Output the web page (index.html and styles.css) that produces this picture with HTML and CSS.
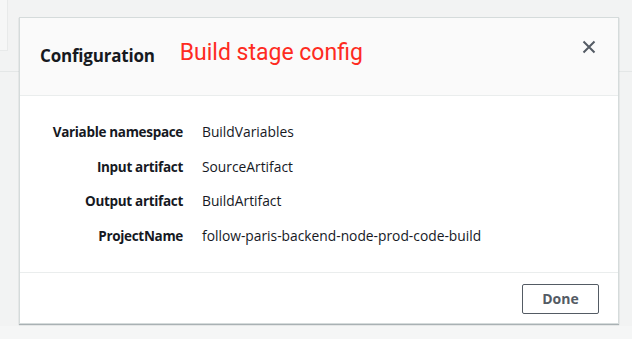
FILE: index.html
```html
<!DOCTYPE html>
<html lang="en">
<head>
    <meta charset="UTF-8">
    <meta name="viewport" content="width=device-width, initial-scale=1.0">
    <title>Configuration</title>
    <link rel="stylesheet" href="styles.css">
</head>
<body>
    <div class="side-panel"></div>

    <div class="modal" role="dialog" aria-labelledby="modalTitle">
        <header class="modal-header">
            <h2 id="modalTitle">Configuration</h2>
            <span class="note">Build stage config</span>
            <button class="close-btn" aria-label="Close">
                <svg width="14" height="14" viewBox="0 0 14 14" aria-hidden="true">
                    <path d="M1.5 1.5 L12.5 12.5 M12.5 1.5 L1.5 12.5" stroke="#545b64" stroke-width="2" fill="none"/>
                </svg>
            </button>
        </header>

        <div class="modal-body">
            <dl class="details">
                <dt>Variable namespace</dt>
                <dd>BuildVariables</dd>
                <dt>Input artifact</dt>
                <dd>SourceArtifact</dd>
                <dt>Output artifact</dt>
                <dd>BuildArtifact</dd>
                <dt>ProjectName</dt>
                <dd>follow-paris-backend-node-prod-code-build</dd>
            </dl>
        </div>

        <footer class="modal-footer">
            <button class="btn">Done</button>
        </footer>
    </div>
</body>
</html>
```

FILE: styles.css
```css
:root {
    --text-color: #16191f;
    --muted: #545b64;
    --page-bg: #f2f3f3;
    --border-color: #eaeded;
    --modal-border: #d5dbdb;
}

html, body {
    height: 100%;
}

body {
    margin: 0;
    padding: 17px 13px 0 19px;
    box-sizing: border-box;
    font-family: 'Open Sans', 'Liberation Sans', sans-serif;
    font-size: 13.5px;
    color: var(--text-color);
    background:
        linear-gradient(#e4e7e7, #e4e7e7) 0 71px / 100% 1px no-repeat,
        linear-gradient(#f5f6f6, #f5f6f6) 0 326px / 100% 13px no-repeat,
        var(--page-bg);
    position: relative;
}

.side-panel {
    position: absolute;
    left: 0;
    top: 0;
    width: 7px;
    height: 50px;
    background: #f6f7f7;
    border-right: 1px solid #e8eaea;
    border-bottom: 1px solid #e8eaea;
}

.modal {
    position: relative;
    background: white;
    border: 1px solid var(--modal-border);
    box-shadow: 0 1px 1px rgba(0, 28, 36, 0.3);
}

.modal-header {
    display: flex;
    align-items: center;
    height: 77px;
    padding: 0 20px;
    background: #fafafa;
    border-bottom: 1px solid var(--border-color);
}

.modal-header h2 {
    margin: 0;
    font-size: 17px;
    font-weight: 700;
    letter-spacing: -0.2px;
    padding-bottom: 2px;
}

.note {
    margin-left: 25px;
    color: #fe2a21;
    font-family: Roboto, sans-serif;
    font-size: 23px;
    padding-bottom: 8px;
}

.close-btn {
    margin-left: auto;
    margin-top: -20px;
    margin-right: -3px;
    width: 24px;
    height: 24px;
    padding: 0;
    display: flex;
    align-items: center;
    justify-content: center;
    background: none;
    border: none;
    cursor: pointer;
}

.modal-body {
    padding: 26px 20px 26px 20px;
}

.details {
    display: grid;
    grid-template-columns: 143px 1fr;
    column-gap: 19px;
    row-gap: 14.5px;
    margin: 0;
    line-height: 20px;
}

.details dt {
    font-weight: 700;
    text-align: right;
    letter-spacing: -0.32px;
}

.details dd {
    margin: 0;
    font-size: 13.8px;
}

.modal-footer {
    display: flex;
    justify-content: flex-end;
    padding: 11px 19px 9px;
    border-top: 1px solid var(--border-color);
}

.btn {
    width: 77px;
    height: 30px;
    border: 1px solid var(--muted);
    border-radius: 2px;
    background: white;
    color: var(--muted);
    font-family: inherit;
    font-size: 14px;
    font-weight: 700;
    cursor: pointer;
}
```
